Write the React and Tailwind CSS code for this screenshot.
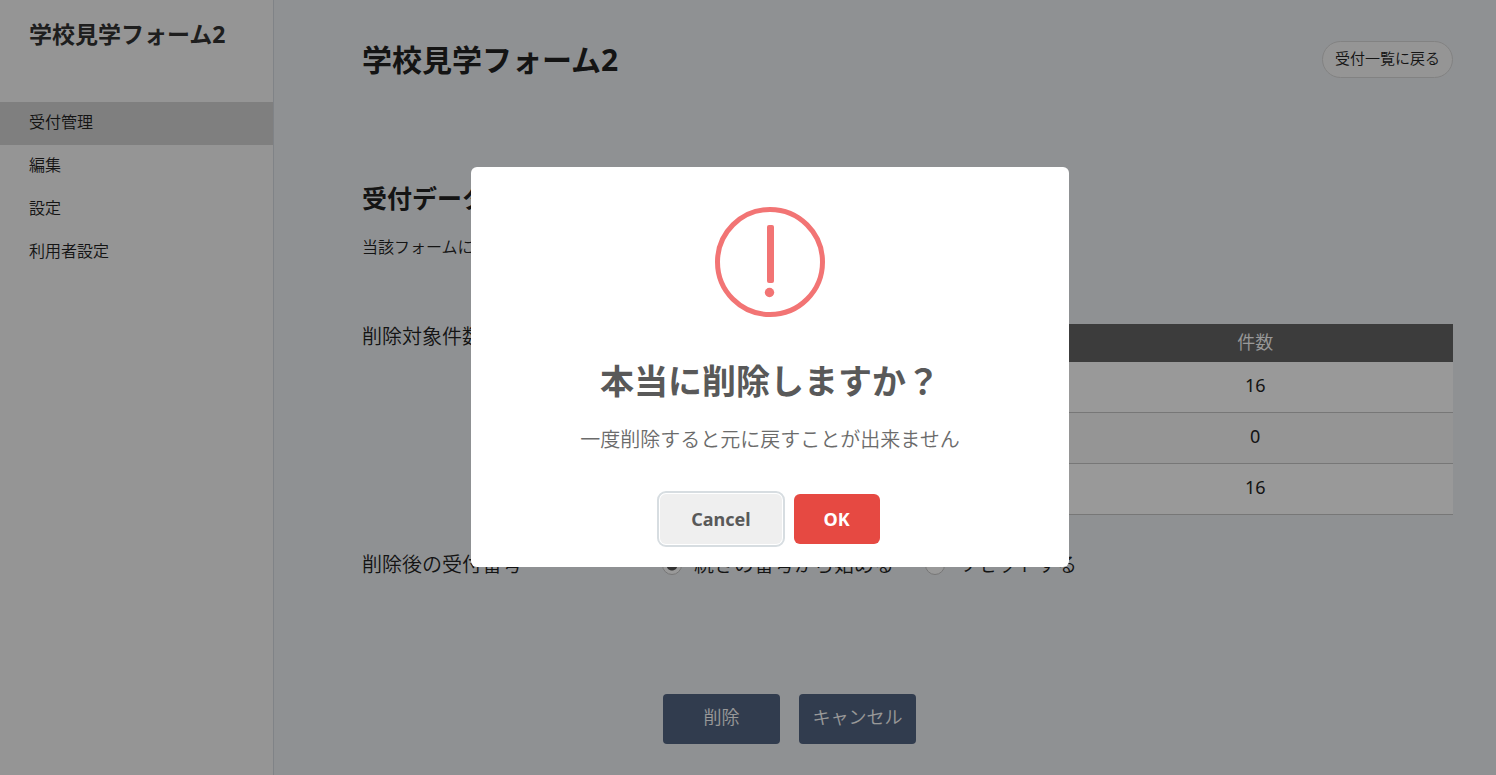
import { useState } from "react";

const menuItems = [
    { id: 1, label: "受付管理", active: true },
    { id: 2, label: "編集", active: false },
    { id: 3, label: "設定", active: false },
    { id: 4, label: "利用者設定", active: false },
];

const counts = [
    { id: 1, name: "受付", count: 16 },
    { id: 2, name: "取消", count: 0 },
    { id: 3, name: "合計", count: 16 },
];

function Sidebar() {
    return (
        <aside className="w-[274px] shrink-0 border-r border-[#d6dae1] bg-[#f8f8f8]">
            <p className="h-[102px] pt-[18px] pl-[29px] text-[23px] leading-8 font-bold text-[#333]">
                学校見学フォーム2
            </p>
            <nav>
                {menuItems.map((item) => (
                    <a
                        key={item.id}
                        href="#"
                        className={
                            item.active
                                ? "block h-[43px] bg-[#d4d4d4] pl-[29px] text-base leading-10"
                                : "block h-[43px] pl-[29px] text-base leading-10"
                        }
                    >
                        {item.label}
                    </a>
                ))}
            </nav>
        </aside>
    );
}

function CountTable() {
    return (
        <table className="w-full table-fixed border-separate border-spacing-0 text-center text-lg">
            <thead>
                <tr className="h-[38px] bg-[#646464] text-white">
                    <th className="pb-0.5 font-[350] leading-6">受付状況</th>
                    <th className="pb-0.5 font-[350] leading-6">件数</th>
                </tr>
            </thead>
            <tbody className="font-normal">
                {counts.map((row) => (
                    <tr key={row.id} className="h-[51px] bg-white even:bg-[#f8f8f8]">
                        <td className="border-b border-[#c6c6c6] pb-1">
                            {row.name}
                        </td>
                        <td className="border-b border-[#c6c6c6] pb-1">
                            {row.count}
                        </td>
                    </tr>
                ))}
            </tbody>
        </table>
    );
}

function RadioOption({ value, label, selected, onChange }) {
    return (
        <label className="flex items-center gap-3 leading-8">
            <input
                type="radio"
                name="numbering"
                value={value}
                checked={selected === value}
                onChange={() => onChange(value)}
                className="size-5 appearance-none rounded-full border border-[#c6c6c6] bg-white checked:bg-[radial-gradient(circle,#555_5px,#fff_6px)]"
            />
            {label}
        </label>
    );
}

function ConfirmDialog({ onClose }) {
    return (
        <div className="fixed inset-0 flex items-center justify-center bg-black/40 pb-[41px] pl-11">
            <div
                role="dialog"
                aria-modal="true"
                aria-labelledby="confirm-title"
                className="flex w-[598px] flex-col items-center rounded-md bg-white pt-10 pb-[23px]"
            >
                <svg
                    viewBox="0 0 110 110"
                    className="size-[110px]"
                    fill="#f27474"
                    aria-hidden="true"
                >
                    <circle
                        cx="55"
                        cy="55"
                        r="52.5"
                        fill="none"
                        stroke="#f27474"
                        strokeWidth="5"
                    />
                    <rect x="52" y="18" width="7" height="58" rx="2" />
                    <circle cx="54.5" cy="85.5" r="4.7" />
                </svg>
                <h2
                    id="confirm-title"
                    className="mt-10 text-[34px] leading-12 font-bold text-[#595959]"
                >
                    本当に削除しますか？
                </h2>
                <p className="mt-[19px] text-xl leading-8 font-[350] text-[#6b6b6b]">
                    一度削除すると元に戻すことが出来ません
                </p>
                <div className="mt-[38px] flex gap-3 text-lg font-bold">
                    <button
                        type="button"
                        onClick={onClose}
                        className="h-[50px] rounded-md bg-[#efefef] px-[31px] text-[#595959] outline-2 outline-offset-1 outline-[#d7dde1]"
                    >
                        Cancel
                    </button>
                    <button
                        type="button"
                        onClick={onClose}
                        className="h-[50px] rounded-md bg-[#e64942] px-[30px] text-white"
                    >
                        OK
                    </button>
                </div>
            </div>
        </div>
    );
}

export default function App() {
    const [isOpenConfirm, setIsOpenConfirm] = useState(true);
    const [numbering, setNumbering] = useState("continue");

    return (
        <div className="flex min-h-screen bg-[#eff2f5] font-['Noto_Sans','Noto_Sans_CJK_JP',sans-serif] font-[350] text-[#222]">
            <Sidebar />

            <main className="flex-1 pt-[38px] pr-[43px] pb-[31px] pl-[88px]">
                <header className="flex items-start justify-between">
                    <h1 className="text-3xl leading-11 font-bold">
                        学校見学フォーム2
                    </h1>
                    <a
                        href="#"
                        className="mt-[3px] rounded-full border border-[#d9d9d9] bg-[#f8f8f8] px-3 pb-0.5 text-[15px] leading-[33px]"
                    >
                        受付一覧に戻る
                    </a>
                </header>

                <h2 className="mt-[98px] text-[25px] leading-9 font-bold">
                    受付データ削除
                </h2>
                <p className="mt-[19px] text-base leading-6">
                    当該フォームに登録された受付データを削除します。
                </p>

                <div className="mt-[65px] grid grid-cols-[300px_1fr] gap-y-[34px] text-xl">
                    <div className="leading-[26px]">削除対象件数</div>
                    <CountTable />
                    <div className="leading-8">削除後の受付番号</div>
                    <div className="flex gap-[31px]">
                        <RadioOption
                            value="continue"
                            label="続きの番号から始める"
                            selected={numbering}
                            onChange={setNumbering}
                        />
                        <RadioOption
                            value="reset"
                            label="リセットする"
                            selected={numbering}
                            onChange={setNumbering}
                        />
                    </div>
                </div>

                <div className="mt-[113px] ml-[301px] flex gap-[19px] text-lg text-white">
                    <button
                        type="button"
                        onClick={() => setIsOpenConfirm(true)}
                        className="h-[50px] w-[117px] rounded bg-[#526482] pb-1"
                    >
                        削除
                    </button>
                    <button
                        type="button"
                        className="h-[50px] w-[117px] rounded bg-[#526482] pb-1"
                    >
                        キャンセル
                    </button>
                </div>
            </main>

            {isOpenConfirm && (
                <ConfirmDialog onClose={() => setIsOpenConfirm(false)} />
            )}
        </div>
    );
}
